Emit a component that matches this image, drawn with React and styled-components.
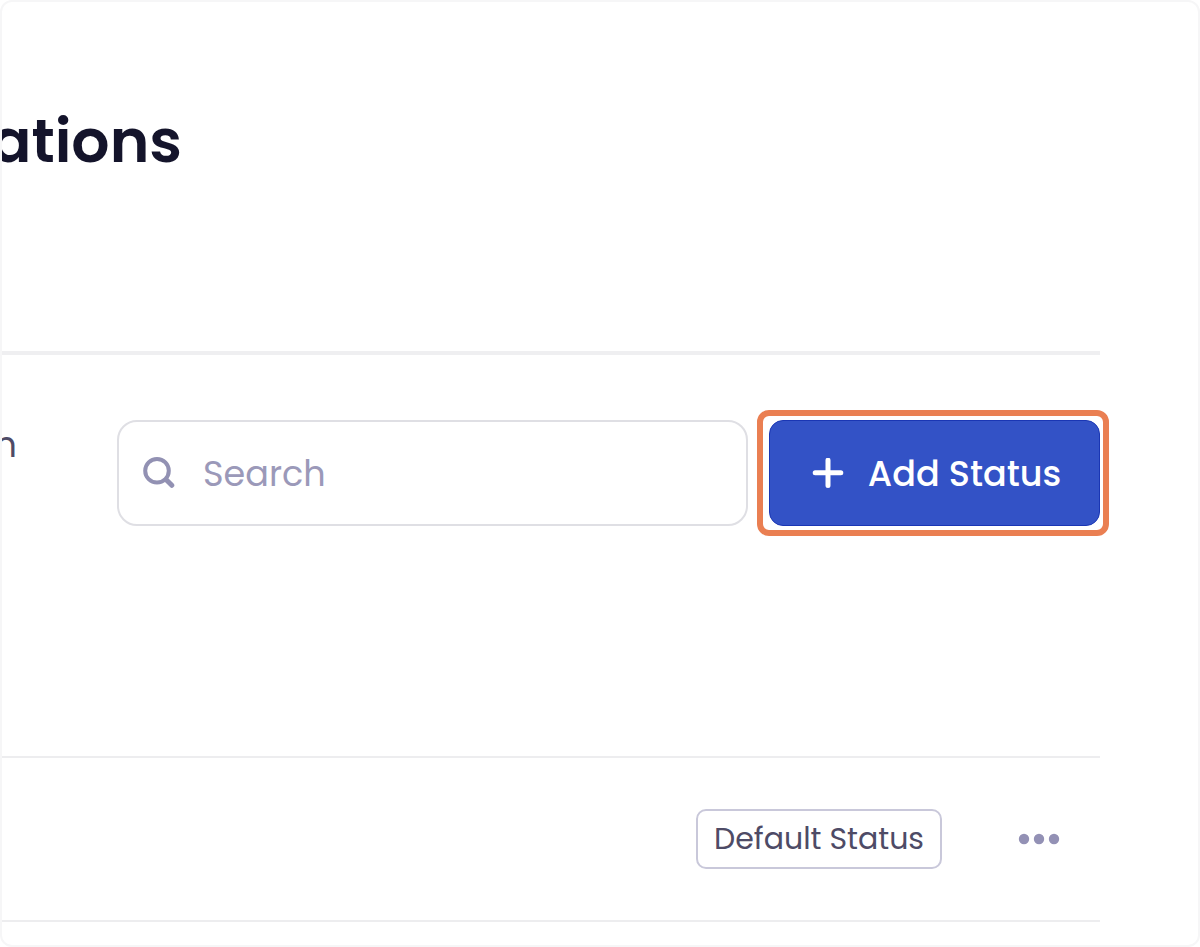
import React, { useState } from "react";
import styled, { createGlobalStyle } from "styled-components";

const App = () => {
  const [search, setSearch] = useState("");

  const onChangeHandler = (e) => {
    setSearch(e.target.value);
  };

  return (
    <>
      <GlobalStyle />
      <Frame>
        <Content>
          <Header>
            <Title>ations</Title>
          </Header>

          <Toolbar>
            <Description>n</Description>
            <Actions>
              <SearchBox>
                <SearchIcon viewBox="0 0 32 32" aria-hidden="true">
                  <circle cx="14" cy="13.8" r="11.8" />
                  <path d="M23.5 23L28.8 28.3" strokeWidth="5" />
                </SearchIcon>
                <SearchInput
                  type="text"
                  aria-label="Search"
                  placeholder="Search"
                  value={search}
                  onChange={onChangeHandler}
                />
              </SearchBox>
              <AddBtn type="button">
                <PlusIcon viewBox="0 0 32 32" aria-hidden="true">
                  <path d="M16 2.2V27.4M3.2 14.8H28.8" />
                </PlusIcon>
                Add Status
              </AddBtn>
            </Actions>
          </Toolbar>

          <StatusRow>
            <StatusTag>Default Status</StatusTag>
            <MoreBtn type="button" aria-label="More options">
              <MoreIcon viewBox="0 0 42 12" aria-hidden="true">
                <circle cx="6" cy="6" r="5.2" />
                <circle cx="21" cy="6" r="5.2" />
                <circle cx="36" cy="6" r="5.2" />
              </MoreIcon>
            </MoreBtn>
          </StatusRow>
        </Content>
      </Frame>
    </>
  );
};
export default App;

const GlobalStyle = createGlobalStyle`
  * {
    box-sizing: border-box;
  }
  body {
    margin: 0;
    background-color: #fff;
    font-family: Poppins, Inter, "Noto Sans", sans-serif;
  }
  button, input {
    font-family: inherit;
  }
`;

const Frame = styled.div`
  min-height: 100vh;
  border: 2px solid #f6f6f7;
  border-radius: 12px;
  overflow: hidden;
`;
const Content = styled.main`
  padding-right: 98px;
`;

/* ---------------------------------- header --------------------------------- */
const Header = styled.header`
  height: 353px;
  padding-top: 94px;
  border-bottom: 4px solid #efeff1;
`;
const Title = styled.h1`
  display: flex;
  justify-content: flex-end;
  width: 180px;
  margin: 0;
  overflow: hidden;
  color: #14142b;
  font-size: 60px;
  font-weight: 600;
  line-height: 90px;
`;

/* --------------------------------- toolbar --------------------------------- */
const Toolbar = styled.div`
  display: flex;
  justify-content: space-between;
  height: 403px;
  padding-top: 65px;
  border-bottom: 2px solid #ededef;
`;
const Description = styled.p`
  display: flex;
  flex: none;
  justify-content: flex-end;
  width: 15px;
  margin: 0;
  overflow: hidden;
  color: #4e4b66;
  font-size: 35px;
  line-height: 50px;
`;
const Actions = styled.div`
  display: flex;
  flex: 1;
  gap: 21px;
  min-width: 0;
  height: 106px;
  margin-left: 100px;
`;
const SearchBox = styled.label`
  display: flex;
  flex: 1;
  align-items: center;
  gap: 28px;
  min-width: 0;
  padding: 0 24px;
  border: 2px solid #dfdfe4;
  border-radius: 20px;
`;
const SearchIcon = styled.svg`
  flex: none;
  width: 32px;
  height: 32px;
  fill: none;
  stroke: #9291b3;
  stroke-width: 4;
  stroke-linecap: round;
`;
const SearchInput = styled.input`
  flex: 1;
  min-width: 0;
  padding: 2px 0 0;
  border: none;
  outline: none;
  background: none;
  color: #4e4b66;
  font-size: 35px;
  line-height: 50px;

  &::placeholder {
    color: #9b99b9;
    opacity: 1;
  }
`;
const AddBtn = styled.button`
  position: relative;
  display: flex;
  flex: none;
  justify-content: center;
  align-items: center;
  gap: 24px;
  width: 331px;
  padding: 2px 0 0 4px;
  border: 1px solid #1a36b4;
  border-radius: 14px;
  background-color: #3352c6;
  color: #fff;
  font-size: 35px;
  font-weight: 500;
  line-height: 50px;
  white-space: nowrap;

  /* highlight ring around the button */
  &::after {
    content: "";
    position: absolute;
    inset: -11px -10px -11px -13px;
    border: 6px solid #ea7f52;
    border-radius: 12px;
  }
`;
const PlusIcon = styled.svg`
  flex: none;
  width: 32px;
  height: 32px;
  fill: none;
  stroke: #fff;
  stroke-width: 5;
  stroke-linecap: round;
`;

/* -------------------------------- status row ------------------------------- */
const StatusRow = styled.div`
  display: flex;
  justify-content: flex-end;
  align-items: center;
  gap: 76px;
  height: 164px;
  padding-right: 40px;
  border-bottom: 2px solid #ededef;
`;
const StatusTag = styled.span`
  display: flex;
  justify-content: center;
  align-items: center;
  width: 246px;
  height: 60px;
  border: 2px solid #c9c8da;
  border-radius: 10px;
  color: #4e4b66;
  font-size: 30px;
  line-height: 40px;
  white-space: nowrap;
`;
const MoreBtn = styled.button`
  display: flex;
  padding: 0;
  border: none;
  background: none;
`;
const MoreIcon = styled.svg`
  width: 42px;
  height: 12px;
  fill: #9391b5;
`;
